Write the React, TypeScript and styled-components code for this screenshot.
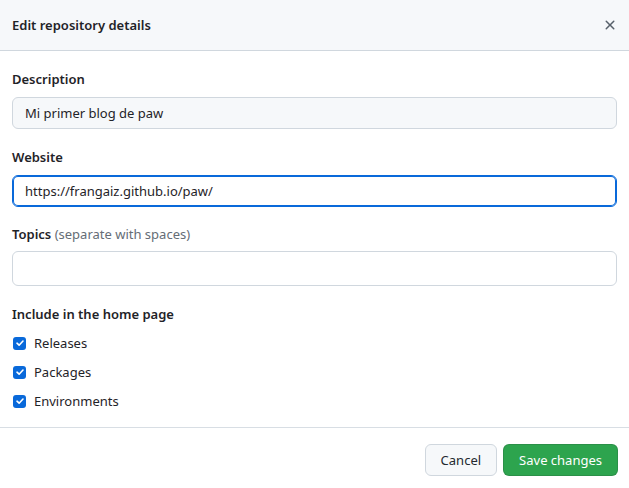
import React from "react"
import styled, { createGlobalStyle } from "styled-components"

const GlobalStyle = createGlobalStyle`
    html, body {
        margin: 0;
        padding: 0;
        background: #ffffff;
    }
    body {
        font-family: "Noto Sans", "Open Sans", "Liberation Sans", sans-serif;
        font-size: 13px;
        color: #1f2328;
    }
`

const Dialog = styled.div`
    width: 629px;
    height: 488px;
    display: flex;
    flex-direction: column;
    background: #ffffff;
`

const Header = styled.header`
    display: flex;
    align-items: center;
    justify-content: space-between;
    height: 51px;
    padding: 0 12px;
    background: #f6f8fa;
    border-bottom: 1px solid #d0d7de;
    box-sizing: border-box;
`

const Title = styled.h1`
    margin: 0;
    font-size: 13px;
    font-weight: 600;
    color: #1f2328;
`

const CloseButton = styled.button`
    display: flex;
    align-items: center;
    justify-content: center;
    width: 20px;
    height: 20px;
    margin-right: -3px;
    padding: 0;
    border: none;
    background: transparent;
    color: #57606a;
    cursor: pointer;
`

const Body = styled.div`
    display: flex;
    flex-direction: column;
    padding: 18px 12px 0;
`

const Field = styled.div<{ $gap?: number }>`
    display: flex;
    flex-direction: column;
    margin-bottom: ${(p) => p.$gap ?? 18}px;
`

const Label = styled.label<{ $gap?: number }>`
    font-weight: 600;
    font-size: 13px;
    line-height: 20px;
    margin-bottom: ${(p) => p.$gap ?? 8}px;
`

const Hint = styled.span`
    font-weight: 400;
    color: #656d76;
`

const Input = styled.input<{ $focused?: boolean; $muted?: boolean; $tall?: boolean }>`
    box-sizing: border-box;
    width: 100%;
    height: ${(p) => (p.$tall ? 35 : 32)}px;
    padding: 0 12px;
    font-family: inherit;
    font-size: 13px;
    color: #1f2328;
    background: ${(p) => (p.$muted ? "#f6f8fa" : "#ffffff")};
    border: 1px solid ${(p) => (p.$focused ? "#0969da" : "#d0d7de")};
    border-radius: 6px;
    outline: none;
    box-shadow: ${(p) => (p.$focused ? "inset 0 0 0 1px #0969da" : "none")};
`

const CheckList = styled.div`
    display: flex;
    flex-direction: column;
    gap: 9px;
`

const CheckRow = styled.label`
    display: flex;
    align-items: center;
    gap: 8px;
    height: 20px;
`

const Box = styled.span`
    display: flex;
    align-items: center;
    justify-content: center;
    width: 13px;
    height: 13px;
    margin-left: 1px;
    border-radius: 3px;
    background: #0969da;
`

const Footer = styled.footer`
    margin-top: auto;
    display: flex;
    justify-content: flex-end;
    gap: 6px;
    padding: 16px 11px 12px;
    border-top: 1px solid #d8dee4;
`

const Button = styled.button<{ $primary?: boolean }>`
    height: 32px;
    padding: 0 15px;
    font-family: inherit;
    font-size: 13px;
    font-weight: 400;
    border-radius: 6px;
    cursor: pointer;
    color: ${(p) => (p.$primary ? "#ffffff" : "#24292f")};
    background: ${(p) => (p.$primary ? "#2da44e" : "#f6f8fa")};
    border: 1px solid ${(p) => (p.$primary ? "rgba(31,35,40,0.15)" : "#d0d7de")};
`

const Check = () => (
    <Box>
        <svg width="10" height="10" viewBox="0 0 10 10" fill="none">
            <path d="M2 5.2 L4.1 7.2 L8 3" stroke="#fff" strokeWidth="1.6" strokeLinecap="round" strokeLinejoin="round" />
        </svg>
    </Box>
)

export default function App() {
    return (
        <Dialog>
            <GlobalStyle />
            <Header>
                <Title>Edit repository details</Title>
                <CloseButton aria-label="Close">
                    <svg width="16" height="16" viewBox="0 0 16 16" fill="currentColor">
                        <path d="M3.72 3.72a.75.75 0 0 1 1.06 0L8 6.94l3.22-3.22a.749.749 0 0 1 1.275.326.749.749 0 0 1-.215.734L9.06 8l3.22 3.22a.749.749 0 0 1-.326 1.275.749.749 0 0 1-.734-.215L8 9.06l-3.22 3.22a.751.751 0 0 1-1.042-.018.751.751 0 0 1-.018-1.042L6.94 8 3.72 4.78a.75.75 0 0 1 0-1.06Z" />
                    </svg>
                </CloseButton>
            </Header>
            <Body>
                <Field>
                    <Label>Description</Label>
                    <Input $muted defaultValue="Mi primer blog de paw" />
                </Field>
                <Field $gap={17}>
                    <Label>Website</Label>
                    <Input $focused defaultValue="https://frangaiz.github.io/paw/" />
                </Field>
                <Field $gap={18}>
                    <Label $gap={7}>
                        Topics <Hint>(separate with spaces)</Hint>
                    </Label>
                    <Input $tall />
                </Field>
                <Label $gap={9}>Include in the home page</Label>
                <CheckList>
                    <CheckRow><Check />Releases</CheckRow>
                    <CheckRow><Check />Packages</CheckRow>
                    <CheckRow><Check />Environments</CheckRow>
                </CheckList>
            </Body>
            <Footer>
                <Button>Cancel</Button>
                <Button $primary>Save changes</Button>
            </Footer>
        </Dialog>
    )
}
